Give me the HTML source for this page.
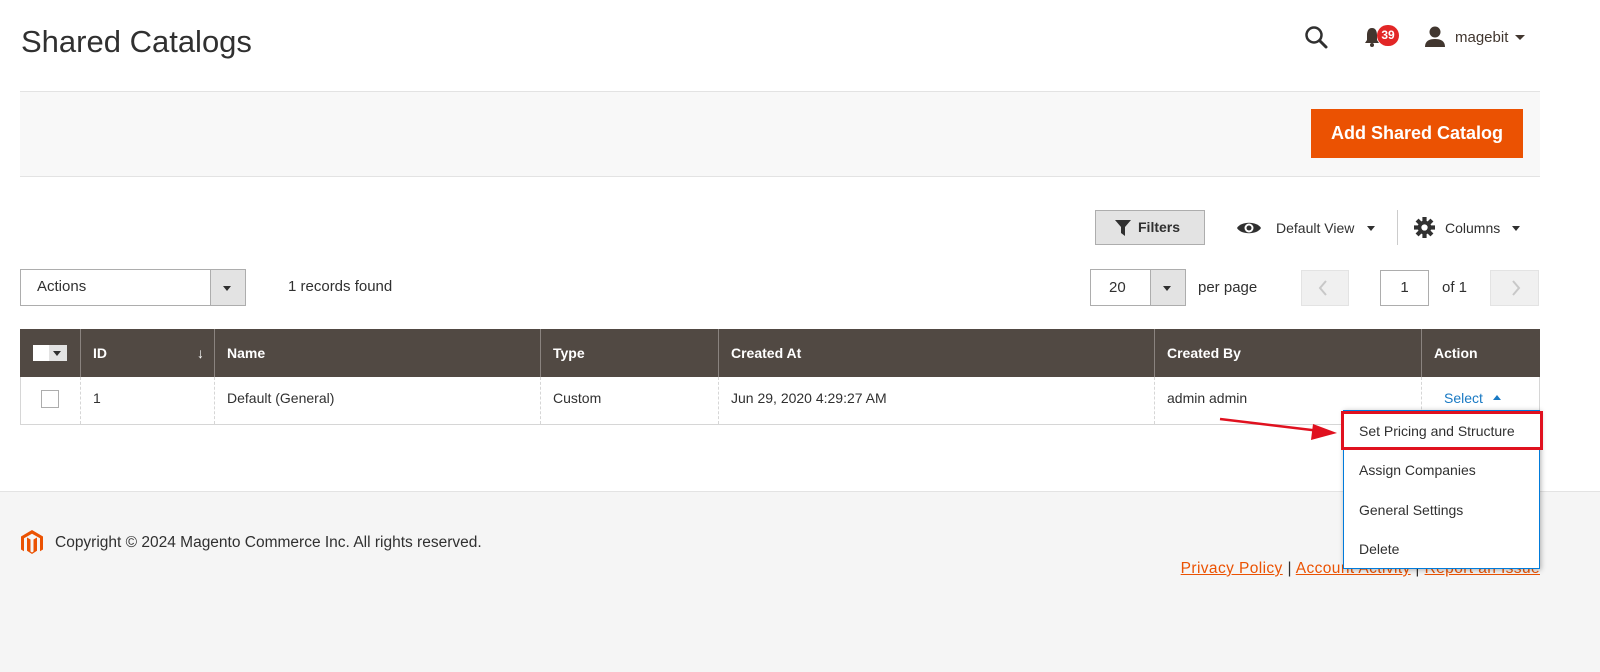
<!DOCTYPE html><html><head><style>
*{box-sizing:border-box;margin:0;padding:0}
body{width:1600px;height:672px;overflow:hidden;background:#fff;font-family:"Liberation Sans",sans-serif;color:#303030;position:relative;font-size:14px}
.a{position:absolute}
.th{position:absolute;top:329px;height:48px;color:#fff;font-weight:bold;font-size:14px;line-height:48px;padding-left:12px;border-left:1px solid #8a837f}
.td{position:absolute;top:377px;height:47px;line-height:42px;padding-left:12px;border-left:1px dashed #d6d6d6;font-size:14px;color:#303030}
.btn{position:absolute;border:1px solid #adadad;background:#fff}
</style></head><body>
<div class="a" style="left:21px;top:24px;font-size:31px;color:#303030">Shared Catalogs</div>
<svg class="a" style="left:1304px;top:25px" width="26" height="26" viewBox="0 0 26 26"><circle cx="10" cy="10" r="7.5" fill="none" stroke="#303030" stroke-width="2.5"/><path d="M15.5 15.5L22 22" stroke="#303030" stroke-width="3" stroke-linecap="round"/></svg>
<svg class="a" style="left:1363px;top:26px" width="18" height="22" viewBox="0 0 18 22"><path d="M9 2C5 2 4 6 4 9v5l-2 3h14l-2-3V9c0-3-1-7-5-7z" fill="#41362f"/><circle cx="9" cy="19" r="2" fill="#41362f"/></svg>
<div class="a" style="left:1377px;top:25px;width:22px;height:21px;border-radius:11px;background:#e22626;color:#fff;font-size:12px;font-weight:bold;text-align:center;line-height:21px">39</div>
<svg class="a" style="left:1424px;top:25px" width="22" height="22" viewBox="0 0 22 22"><circle cx="11" cy="7" r="5.5" fill="#41362f"/><path d="M1 22c0-6 4-8 10-8s10 2 10 8z" fill="#41362f"/></svg>
<div class="a" style="left:1455px;top:29px;font-size:15px;color:#41362f">magebit</div>
<div class="a" style="left:1515px;top:35px;border:5px solid transparent;border-top:5px solid #41362f;border-bottom:0"></div>

<div class="a" style="left:20px;top:91px;width:1520px;height:86px;background:#f8f8f8;border-top:1px solid #e3e3e3;border-bottom:1px solid #e3e3e3"></div>
<div class="a" style="left:1311px;top:109px;width:212px;height:49px;background:#eb5202;color:#fff;font-weight:bold;font-size:18px;text-align:center;line-height:49px">Add Shared Catalog</div>

<div class="a" style="left:1095px;top:210px;width:110px;height:35px;background:#e3e3e3;border:1px solid #adadad;font-weight:bold;font-size:14px;line-height:33px;padding-left:42px;color:#303030">Filters</div>
<svg class="a" style="left:1115px;top:220px" width="16" height="16" viewBox="0 0 16 16"><path d="M0 0h16L10 7v9l-4-3V7z" fill="#303030"/></svg>
<svg class="a" style="left:1236px;top:219px" width="26" height="18" viewBox="0 0 26 18"><path d="M1 9C5 2 21 2 25 9 21 16 5 16 1 9z" fill="#303030"/><circle cx="13" cy="9" r="4.5" fill="#fff"/><circle cx="13" cy="9" r="2.5" fill="#303030"/></svg>
<div class="a" style="left:1276px;top:220px;font-size:14px;color:#303030">Default View</div>
<div class="a" style="left:1367px;top:226px;border:4.5px solid transparent;border-top:5px solid #303030;border-bottom:0"></div>
<div class="a" style="left:1397px;top:210px;width:1px;height:35px;background:#ccc"></div>
<svg class="a" style="left:1414px;top:217px" width="21" height="21" viewBox="0 0 20 20"><g fill="#303030"><circle cx="10" cy="10" r="6.5"/><rect x="8" y="0" width="4" height="20"/><rect x="0" y="8" width="20" height="4"/><rect x="8" y="0" width="4" height="20" transform="rotate(45 10 10)"/><rect x="8" y="0" width="4" height="20" transform="rotate(-45 10 10)"/></g><circle cx="10" cy="10" r="3" fill="#fff"/></svg>
<div class="a" style="left:1445px;top:220px;font-size:14px;color:#303030">Columns</div>
<div class="a" style="left:1512px;top:226px;border:4.5px solid transparent;border-top:5px solid #303030;border-bottom:0"></div>

<div class="btn" style="left:20px;top:269px;width:226px;height:37px;border-color:#adadad"></div>
<div class="a" style="left:37px;top:278px;font-size:15px">Actions</div>
<div class="a" style="left:210px;top:270px;width:35px;height:35px;background:#e3e3e3;border-left:1px solid #adadad"></div>
<div class="a" style="left:223px;top:286px;border:4.5px solid transparent;border-top:5px solid #303030;border-bottom:0"></div>
<div class="a" style="left:288px;top:278px;font-size:15px">1 records found</div>

<div class="btn" style="left:1090px;top:269px;width:96px;height:37px"></div>
<div class="a" style="left:1109px;top:279px;font-size:15px">20</div>
<div class="a" style="left:1150px;top:270px;width:35px;height:35px;background:#e3e3e3;border-left:1px solid #adadad"></div>
<div class="a" style="left:1163px;top:286px;border:4.5px solid transparent;border-top:5px solid #303030;border-bottom:0"></div>
<div class="a" style="left:1198px;top:279px;font-size:15px">per page</div>
<div class="a" style="left:1301px;top:270px;width:48px;height:36px;background:#f0f0f0;border:1px solid #e3e3e3"></div>
<svg class="a" style="left:1317px;top:279px" width="12" height="18"><path d="M9 2L3 9l6 7" fill="none" stroke="#c8c8c8" stroke-width="2"/></svg>
<div class="btn" style="left:1380px;top:270px;width:49px;height:36px;text-align:center;line-height:34px;font-size:15px">1</div>
<div class="a" style="left:1442px;top:279px;font-size:15px">of 1</div>
<div class="a" style="left:1490px;top:270px;width:49px;height:36px;background:#f0f0f0;border:1px solid #e3e3e3"></div>
<svg class="a" style="left:1510px;top:279px" width="12" height="18"><path d="M3 2l6 7-6 7" fill="none" stroke="#c8c8c8" stroke-width="2"/></svg>

<div class="a" style="left:20px;top:329px;width:1520px;height:48px;background:#514943"></div>
<div class="a" style="left:33px;top:345px;width:34px;height:16px;background:#fff"></div>
<div class="a" style="left:49px;top:345px;width:18px;height:16px;background:#e3e3e3"></div>
<div class="a" style="left:53px;top:351px;border:4px solid transparent;border-top:5px solid #303030;border-bottom:0"></div>
<div class="th" style="left:80px;width:134px">ID<span style="position:absolute;right:10px;font-weight:normal">↓</span></div>
<div class="th" style="left:214px;width:326px">Name</div>
<div class="th" style="left:540px;width:178px">Type</div>
<div class="th" style="left:718px;width:436px">Created At</div>
<div class="th" style="left:1154px;width:267px">Created By</div>
<div class="th" style="left:1421px;width:119px">Action</div>

<div class="a" style="left:20px;top:377px;width:1520px;height:48px;border:1px solid #d6d6d6;border-top:0"></div>
<div class="a" style="left:41px;top:390px;width:18px;height:18px;border:1px solid #adadad;background:#fff"></div>
<div class="td" style="left:80px">1</div>
<div class="td" style="left:214px">Default (General)</div>
<div class="td" style="left:540px">Custom</div>
<div class="td" style="left:718px">Jun 29, 2020 4:29:27 AM</div>
<div class="td" style="left:1154px">admin admin</div>
<div class="td" style="left:1421px;width:118px;padding-left:22px;color:#1979c3">Select <span style="display:inline-block;margin-left:6px;border:4.5px solid transparent;border-bottom:5px solid #1979c3;border-top:0;vertical-align:middle;margin-top:-3px"></span></div>

<div class="a" style="left:0;top:491px;width:1600px;height:181px;background:#f5f5f5;border-top:1px solid #e3e3e3"></div>
<svg class="a" style="left:21px;top:530px" width="22" height="26" viewBox="0 0 22 26"><path d="M11 0L0 6.5v13l3 1.8V8.3L11 3.7l8 4.6v13l3-1.8v-13z" fill="#eb5202"/><path d="M9.5 9.5L6 7.5v13.3L11 24l5-3.2V7.5l-3.5 2v12l-1.5 1-1.5-1z" fill="#eb5202"/></svg>
<div class="a" style="left:55px;top:534px;font-size:15.5px;color:#303030">Copyright © 2024 Magento Commerce Inc. All rights reserved.</div>
<div class="a" style="right:60px;top:560px;font-size:15.5px;letter-spacing:0.4px;color:#eb5202;white-space:nowrap"><u>Privacy Policy</u> <span style="color:#303030">|</span> <u>Account Activity</u> <span style="color:#303030">|</span> <u>Report an Issue</u></div>

<div class="a" style="left:1343px;top:410px;width:197px;height:159px;background:#fff;border:1px solid #007bdb;box-shadow:1px 1px 5px rgba(0,0,0,.3)"></div>
<div class="a" style="left:1341px;top:411px;width:202px;height:39px;border:3px solid #e0111f;background:#fff"></div>
<div class="a" style="left:1359px;top:423px;font-size:14px">Set Pricing and Structure</div>
<div class="a" style="left:1359px;top:462px;font-size:14px">Assign Companies</div>
<div class="a" style="left:1359px;top:502px;font-size:14px">General Settings</div>
<div class="a" style="left:1359px;top:541px;font-size:14px">Delete</div>
<svg class="a" style="left:1215px;top:412px" width="125" height="30"><path d="M5 7L105 19" stroke="#e0111f" stroke-width="2.5"/><path d="M122 21L98 12 96 28z" fill="#e0111f"/></svg>
</body></html>
